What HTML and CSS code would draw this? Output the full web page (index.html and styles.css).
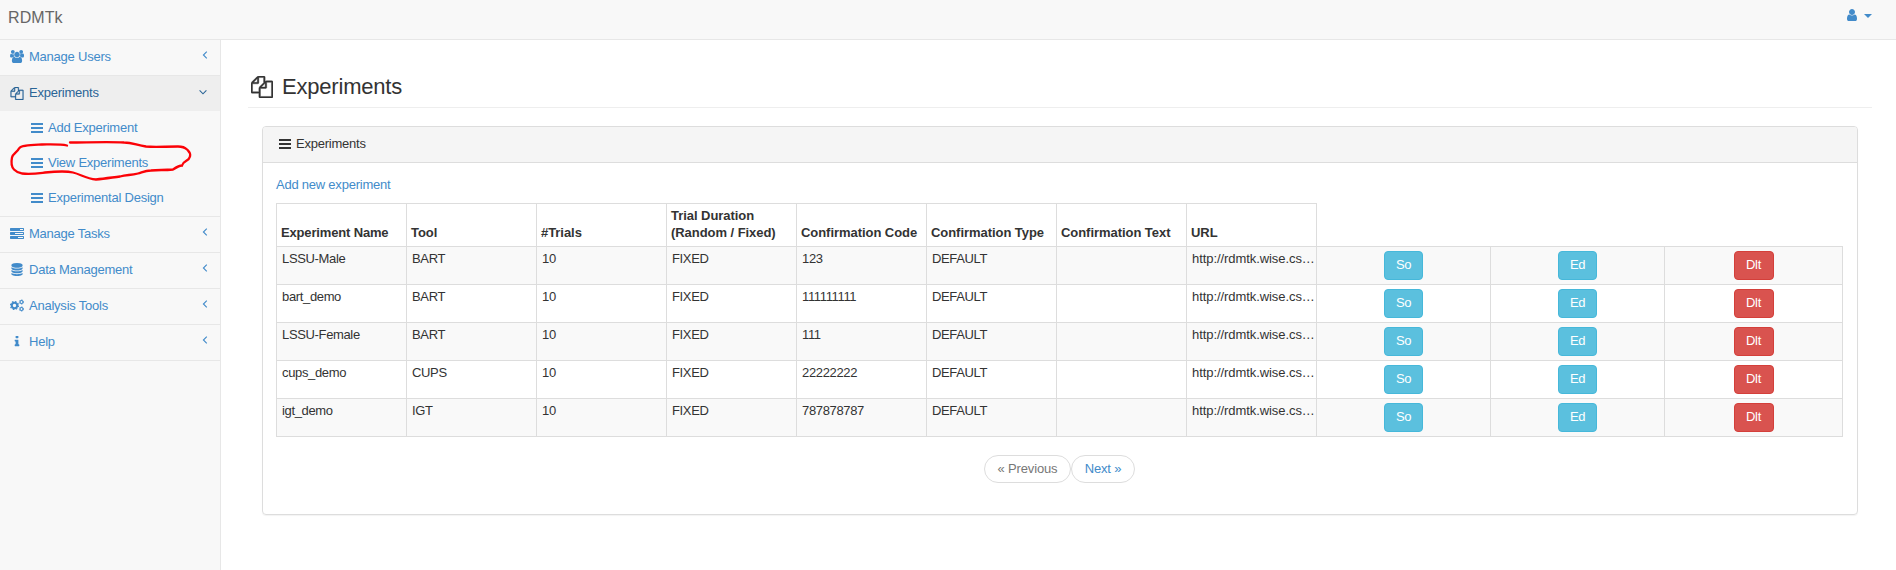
FILE: index.html
```
<!DOCTYPE html>
<html lang="en">
<head>
<meta charset="utf-8">
<title>RDMTk</title>
<link rel="stylesheet" href="styles.css">
</head>
<body>
<svg class="defs" aria-hidden="true">
  <symbol id="bars" viewBox="0 0 12 13"><path d="M0 2h12v2H0zM0 6h12v2H0zM0 10h12v2H0z"/></symbol>
  <symbol id="files" viewBox="0 0 1792 1792"><path stroke="currentColor" stroke-width="30" d="M1696 384q40 0 68 28t28 68v1216q0 40-28 68t-68 28h-960q-40 0-68-28t-28-68v-288h-544q-40 0-68-28t-28-68v-672q0-40 20-88t48-76l408-408q28-28 76-48t88-20h416q40 0 68 28t28 68v328q68-40 128-40h416zm-544 213l-299 299h299v-299zm-640-384l-299 299h299v-299zm196 647l316-316v-416h-384v416q0 40-28 68t-68 28h-416v640h512v-256q0-40 20-88t48-76zm956 804v-1152h-384v416q0 40-28 68t-68 28h-416v640h896z"/></symbol>
  <symbol id="users" viewBox="0 0 1920 1792"><path d="M593 896q-162 5-265 128h-134q-82 0-138-40.500t-56-118.500q0-353 124-353 6 0 43.500 21t97.500 42.500 119 21.500q67 0 133-23-5 37-5 66 0 159 90 302zm1071 637q0 120-73 189.500t-194 69.500h-874q-121 0-194-69.500t-73-189.500q0-53 3.500-103.500t14-109 26.500-108.500 43-97.500 62-81 85.500-53.500 111.500-20q10 0 43 21.500t73 48 107 48 135 21.500 135-21.500 107-48 73-48 43-21.500q61 0 111.500 20t85.500 53.500 62 81 43 97.500 26.500 108.500 14 109 3.500 103.500zm-1024-1277q0 106-75 181t-181 75-181-75-75-181 75-181 181-75 181 75 75 181zm704 384q0 159-112.500 271.500t-271.500 112.500-271.500-112.500-112.500-271.500 112.500-271.500 271.500-112.500 271.500 112.500 112.500 271.500zm576 225q0 78-56 118.500t-138 40.500h-134q-103-123-265-128 90-143 90-302 0-29-5-66 66 23 133 23 59 0 119-21.500t97.500-42.500 43.500-21q124 0 124 353zm-128-609q0 106-75 181t-181 75-181-75-75-181 75-181 181-75 181 75 75 181z"/></symbol>
  <symbol id="tasks" viewBox="0 0 14 13"><path fill-rule="evenodd" d="M.5 1h13l.5.500v2l-.5.500H.5L0 3.500v-2zM10 2h3v1h-3zM.5 5h13l.5.500v2l-.5.500H.5L0 7.500v-2zM5 6h8v1H5zM.5 9h13l.5.500v2l-.5.500H.5L0 11.500v-2zM8 10h5v1H8z"/></symbol>
  <symbol id="database" viewBox="0 0 1792 1792"><path d="M896 768q237 0 443-43t325-127v170q0 69-103 128t-280 93.500-385 34.500-385-34.500-280-93.500-103-128v-170q119 84 325 127t443 43zm0 768q237 0 443-43t325-127v170q0 69-103 128t-280 93.500-385 34.500-385-34.500-280-93.500-103-128v-170q119 84 325 127t443 43zm0-384q237 0 443-43t325-127v170q0 69-103 128t-280 93.500-385 34.500-385-34.500-280-93.500-103-128v-170q119 84 325 127t443 43zm0-1152q208 0 385 34.500t280 93.500 103 128v128q0 69-103 128t-280 93.500-385 34.500-385-34.500-280-93.500-103-128v-128q0-69 103-128t280-93.500 385-34.500z"/></symbol>
  <symbol id="cogs" viewBox="0 0 14 13"><g fill="none" stroke="currentColor"><circle cx="4.500" cy="6.500" r="2.700" stroke-width="2"/><circle cx="4.500" cy="6.500" r="4" stroke-width="1.200" stroke-dasharray="1.570 1.570"/><circle cx="11.500" cy="3" r="1.500" stroke-width="1.200"/><circle cx="11.500" cy="3" r="2.200" stroke-width=".8" stroke-dasharray="1.150 1.150"/><circle cx="11.500" cy="10" r="1.500" stroke-width="1.200"/><circle cx="11.500" cy="10" r="2.200" stroke-width=".8" stroke-dasharray="1.150 1.150"/></g></symbol>
  <symbol id="info" viewBox="0 0 1792 1792"><path d="M1216 1344v128q0 26-19 45t-45 19h-512q-26 0-45-19t-19-45v-128q0-26 19-45t45-19h64v-384h-64q-26 0-45-19t-19-45v-128q0-26 19-45t45-19h384q26 0 45 19t19 45v576h64q26 0 45 19t19 45zm-128-1152v192q0 26-19 45t-45 19h-256q-26 0-45-19t-19-45v-192q0-26 19-45t45-19h256q26 0 45 19t19 45z"/></symbol>
  <symbol id="user" viewBox="256 128 1280 1536"><path d="M1536 1399q0 109-62.500 187t-150.500 78h-854q-88 0-150.500-78t-62.500-187q0-85 8.500-160.500t31.500-152 58.500-131 94-89 134.500-34.500q131 128 313 128t313-128q76 0 134.500 34.500t94 89 58.500 131 31.500 152 8.500 160.500zm-256-887q0 159-112.500 271.500t-271.500 112.500-271.500-112.500-112.500-271.500 112.500-271.500 271.500-112.500 271.500 112.500 112.500 271.500z"/></symbol>
  <symbol id="left" viewBox="0 0 8 8"><path d="M5.800.6 2.400 4l3.400 3.400" fill="none" stroke="currentColor" stroke-width="1.100"/></symbol>
  <symbol id="down" viewBox="0 0 8 8"><path d="M.6 2.400 4 5.800l3.400-3.400" fill="none" stroke="currentColor" stroke-width="1.100"/></symbol>
</svg>
<header class="navbar">
  <a class="brand">RDMTk</a>
  <a class="account"><svg class="user"><use href="#user"/></svg><span class="caret"></span></a>
</header>
<div class="layout">
  <nav class="sidebar">
    <a class="item"><svg class="icon"><use href="#users"/></svg><span class="label">Manage Users</span><svg class="arrow"><use href="#left"/></svg></a>
    <a class="item active"><svg class="icon"><use href="#files"/></svg><span class="label">Experiments</span><svg class="arrow down"><use href="#down"/></svg></a>
    <div class="submenu">
      <a class="subitem"><svg class="bars"><use href="#bars"/></svg><span>Add Experiment</span></a>
      <a class="subitem"><svg class="bars"><use href="#bars"/></svg><span>View Experiments</span></a>
      <a class="subitem"><svg class="bars"><use href="#bars"/></svg><span>Experimental Design</span></a>
      <svg class="scribble" viewBox="0 0 200 44"><path d="M67 5.500C60 4 50 4.500 42 4.500 32 5 21 5 19 8.500c-2 4-6 5-7 9-1 5-1 9 2 12 3 3 4 3 8 4 9 1 15 0 23-1 10-1 20-2 28 0 8 2 13 6 23 7 9-1 16-2 24-3 7-2 10-1 18-3 4-1 7-3 13-3 8-1 12 0 22-1 3-2 6-4 9-4 1-5 7-4 8-9 1-4-1-5-3-7-2-2-5-3-9-3-13 0-23 1-32 0-11-2-14-4-22-4-14-1-39 0-54 0"/></svg>
    </div>
    <a class="item"><svg class="icon"><use href="#tasks"/></svg><span class="label">Manage Tasks</span><svg class="arrow"><use href="#left"/></svg></a>
    <a class="item"><svg class="icon"><use href="#database"/></svg><span class="label">Data Management</span><svg class="arrow"><use href="#left"/></svg></a>
    <a class="item"><svg class="icon"><use href="#cogs"/></svg><span class="label">Analysis Tools</span><svg class="arrow"><use href="#left"/></svg></a>
    <a class="item"><svg class="icon"><use href="#info"/></svg><span class="label">Help</span><svg class="arrow"><use href="#left"/></svg></a>
  </nav>
  <main class="content">
    <h1 class="page-header"><svg class="title-icon"><use href="#files"/></svg><span>Experiments</span></h1>
    <section class="panel">
      <div class="panel-heading"><svg class="bars"><use href="#bars"/></svg><span>Experiments</span></div>
      <div class="panel-body">
        <a class="add">Add new experiment</a>
        <table class="grid">
          <colgroup><col class="data" span="8"><col class="action" span="2"><col class="last"></colgroup>
          <thead><tr><th class="name">Experiment Name</th><th>Tool</th><th>#Trials</th><th>Trial Duration<br>(Random / Fixed)</th><th>Confirmation Code</th><th>Confirmation Type</th><th>Confirmation Text</th><th>URL</th></tr></thead>
          <tbody>
            <tr><td>LSSU-Male</td><td>BART</td><td>10</td><td>FIXED</td><td>123</td><td>DEFAULT</td><td></td><td class="url">http://rdmtk.wise.cs…</td><td class="act"><a class="btn info">So</a></td><td class="act"><a class="btn info">Ed</a></td><td class="act"><a class="btn danger">Dlt</a></td></tr>
            <tr><td>bart_demo</td><td>BART</td><td>10</td><td>FIXED</td><td>111111111</td><td>DEFAULT</td><td></td><td class="url">http://rdmtk.wise.cs…</td><td class="act"><a class="btn info">So</a></td><td class="act"><a class="btn info">Ed</a></td><td class="act"><a class="btn danger">Dlt</a></td></tr>
            <tr><td>LSSU-Female</td><td>BART</td><td>10</td><td>FIXED</td><td>111</td><td>DEFAULT</td><td></td><td class="url">http://rdmtk.wise.cs…</td><td class="act"><a class="btn info">So</a></td><td class="act"><a class="btn info">Ed</a></td><td class="act"><a class="btn danger">Dlt</a></td></tr>
            <tr><td>cups_demo</td><td>CUPS</td><td>10</td><td>FIXED</td><td>22222222</td><td>DEFAULT</td><td></td><td class="url">http://rdmtk.wise.cs…</td><td class="act"><a class="btn info">So</a></td><td class="act"><a class="btn info">Ed</a></td><td class="act"><a class="btn danger">Dlt</a></td></tr>
            <tr><td>igt_demo</td><td>IGT</td><td>10</td><td>FIXED</td><td>787878787</td><td>DEFAULT</td><td></td><td class="url">http://rdmtk.wise.cs…</td><td class="act"><a class="btn info">So</a></td><td class="act"><a class="btn info">Ed</a></td><td class="act"><a class="btn danger">Dlt</a></td></tr>
          </tbody>
        </table>
        <div class="pager"><a class="page prev">« Previous</a><a class="page next">Next »</a></div>
      </div>
    </section>
  </main>
</div>
</body>
</html>
```
FILE: styles.css
```
* { box-sizing: border-box; }
body { margin: 0; height: 570px; overflow: hidden; display: flex; flex-direction: column; background: #fff; color: #333; font: 13px/18px "Liberation Sans", Arial, sans-serif; letter-spacing: -0.23px; }
a { color: #428bca; text-decoration: none; }
svg { fill: currentColor; flex: none; }
.defs { display: none; }
.navbar { height: 40px; flex: none; display: flex; justify-content: space-between; background: #f8f8f8; border-bottom: 1px solid #e7e7e7; padding: 0 24px 0 8px; }
.brand { color: #666; font-size: 16px; line-height: 35px; letter-spacing: 0.1px; }
.account { display: flex; gap: 7px; padding-top: 9px; }
.user { width: 10px; height: 12px; }
.caret { width: 8px; height: 4px; margin-top: 5px; border: 4px solid transparent; border-top-color: #428bca; border-bottom: 0; }
.layout { flex: 1; display: flex; min-height: 0; }
.sidebar { width: 221px; flex: none; background: #f8f8f8; border-right: 1px solid #e7e7e7; }
.item { height: 36px; display: flex; align-items: center; border-bottom: 1px solid #e7e7e7; padding: 0 11px 2px 10px; }
.item.active { height: 35px; background: #eee; border-bottom: 0; color: #2a6496; padding: 0 13px 1px 10px; }
.icon { width: 14px; height: 13px; }
.bars { width: 12px; height: 13px; }
.label { flex: 1; margin-left: 5px; }
.arrow { width: 8px; height: 8px; margin-bottom: 3px; }
.submenu { position: relative; height: 106px; border-bottom: 1px solid #e7e7e7; }
.subitem { height: 35px; display: flex; align-items: center; gap: 5px; padding: 0 0 2px 31px; }
.scribble { position: absolute; left: 0; top: 29px; width: 200px; height: 44px; fill: none; stroke: #fb0207; stroke-width: 2.300; stroke-linecap: round; }
.content { flex: 1; padding: 0 24px 0 27px; }
.page-header { display: flex; align-items: center; gap: 9px; margin: 0; height: 68px; padding: 27px 0 0 3px; border-bottom: 1px solid #eee; font-size: 22px; line-height: 26px; font-weight: 400; letter-spacing: -0.2px; }
.title-icon { width: 22px; height: 22px; }
.panel { margin: 18px 14px 0 14px; width: 1596px; height: 389px; border: 1px solid #ddd; border-radius: 4px; box-shadow: 0 1px 1px rgba(0,0,0,.05); }
.panel-heading { display: flex; align-items: center; gap: 5px; height: 36px; padding: 0 16px 2px; background: #f5f5f5; border-bottom: 1px solid #ddd; border-radius: 3px 3px 0 0; }
.panel-body { padding: 12px 13px; }
.add { display: block; height: 28px; line-height: 19px; }
.grid { table-layout: fixed; width: 1567px; border-collapse: collapse; }
.data { width: 130px; }
.action { width: 174px; }
.last { width: 178px; }
.grid th, .grid td { border: 1px solid #ddd; text-align: left; white-space: nowrap; }
.grid th { height: 43px; padding: 0 4px 5px; vertical-align: bottom; line-height: 17px; letter-spacing: -0.05px; }
.grid .name { letter-spacing: -0.16px; }
.grid td { height: 38px; padding: 3px 5px 0; vertical-align: top; line-height: 18px; letter-spacing: -0.35px; }
.grid tbody tr:nth-child(odd) { background: #f9f9f9; }
.grid .act { text-align: center; padding: 4px 0 0; }
.grid .url { letter-spacing: -0.07px; }
.btn { display: inline-block; width: 39px; height: 29px; line-height: 25px; border: 1px solid #46b8da; border-radius: 4px; background: #5bc0de; color: #fff; font-size: 13px; vertical-align: top; }
.btn.danger { width: 40px; background: #d9534f; border-color: #d43f3a; }
.pager { display: flex; justify-content: center; padding: 18px 1px 0 0; }
.page { height: 28px; line-height: 25px; border: 1px solid #ddd; border-radius: 14px; text-align: center; letter-spacing: -0.15px; }
.prev { width: 87px; color: #777; }
.next { width: 64px; }
```
